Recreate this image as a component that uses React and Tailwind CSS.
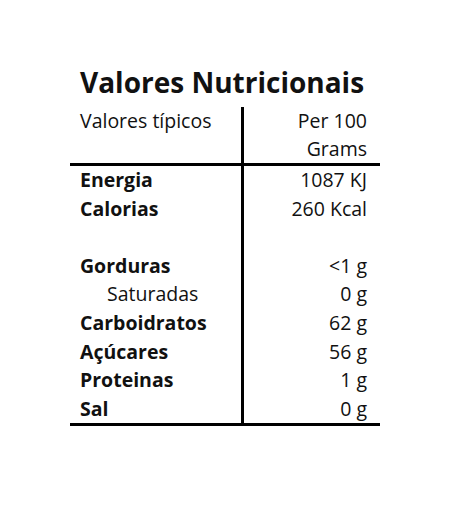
export default function App() {
  const rows = [
    { label: "Energia", value: "1087 KJ", bold: true },
    { label: "Calorias", value: "260 Kcal", bold: true },
    { label: "", value: "", bold: true },
    { label: "Gorduras", value: "<1 g", bold: true },
    { label: "Saturadas", value: "0 g", bold: false, indent: true },
    { label: "Carboidratos", value: "62 g", bold: true },
    { label: "Açúcares", value: "56 g", bold: true },
    { label: "Proteinas", value: "1 g", bold: true },
    { label: "Sal", value: "0 g", bold: true },
  ];

  return (
    <div className="w-[470px] h-[522px] bg-white text-[#111] font-['Open_Sans',sans-serif]">
      <div className="ml-[70px] w-[310px] pt-[65px]">
        <h1 className="pl-[10px] text-[28px] leading-[34px] font-bold mb-[8px]">
          Valores Nutricionais
        </h1>

        <div className="flex text-[19.5px] leading-[28px]">
          <div className="w-[174px] border-r-[3px] border-black pl-[10px]">
            <div>Valores típicos</div>
            <div>&nbsp;</div>
          </div>
          <div className="flex-1 text-right pr-[13px]">
            <div>Per 100</div>
            <div>Grams</div>
          </div>
        </div>

        <div className="flex border-y-[3px] border-black text-[19.5px] leading-[28.6px]">
          <div className="w-[174px] border-r-[3px] border-black pl-[10px]">
            {rows.map((r, i) => (
              <div key={i} className={`${r.bold ? "font-bold" : ""} ${r.indent ? "pl-[27px]" : ""}`}>
                {r.label || "\u00a0"}
              </div>
            ))}
          </div>
          <div className="flex-1 text-right pr-[13px]">
            {rows.map((r, i) => (
              <div key={i}>{r.value || "\u00a0"}</div>
            ))}
          </div>
        </div>
      </div>
    </div>
  );
}
